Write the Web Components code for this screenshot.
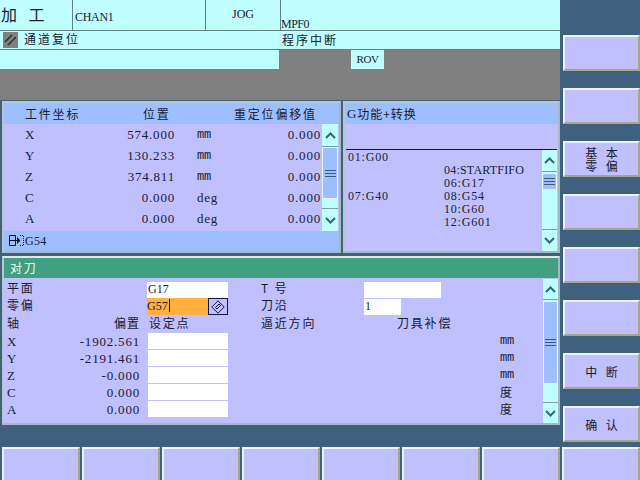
<!DOCTYPE html>
<html lang="zh">
<head>
<meta charset="utf-8">
<style>
html,body{margin:0;padding:0;width:640px;height:480px;overflow:hidden;background:#406080}
body{font:12px/1 "Liberation Serif","Noto Sans CJK SC",serif;color:#182030}
</style>
</head>
<body>
<cnc-app>
  <cnc-header slot="main"></cnc-header>
  <div slot="main" style="display:flex;gap:2px;padding:1px 0 0 2px;height:152px">
    <position-panel></position-panel>
    <gcode-panel></gcode-panel>
  </div>
  <div slot="main" style="padding:3px 0 0 2px"><tool-panel></tool-panel></div>

  <cnc-softkey slot="side"></cnc-softkey>
  <cnc-softkey slot="side"></cnc-softkey>
  <cnc-softkey slot="side">基 本<br>零 偏</cnc-softkey>
  <cnc-softkey slot="side"></cnc-softkey>
  <cnc-softkey slot="side"></cnc-softkey>
  <cnc-softkey slot="side"></cnc-softkey>
  <cnc-softkey slot="side">中 断</cnc-softkey>
  <cnc-softkey slot="side">确 认</cnc-softkey>

  <cnc-softkey slot="bottom"></cnc-softkey>
  <cnc-softkey slot="bottom"></cnc-softkey>
  <cnc-softkey slot="bottom"></cnc-softkey>
  <cnc-softkey slot="bottom"></cnc-softkey>
  <cnc-softkey slot="bottom"></cnc-softkey>
  <cnc-softkey slot="bottom"></cnc-softkey>
  <cnc-softkey slot="bottom"></cnc-softkey>
  <cnc-softkey slot="bottom"></cnc-softkey>
</cnc-app>

<script>
const COMMON = `
  :host{box-sizing:border-box}
  *{box-sizing:border-box}
  .l{font-family:"Liberation Serif",serif;font-size:13px;letter-spacing:.8px}
  .s{font-family:"Liberation Serif",serif;font-size:12px;letter-spacing:0}
  .m{font-family:"Liberation Mono",monospace;font-size:12px;letter-spacing:-.2px}
  .c{font-family:"Noto Sans CJK SC",sans-serif;font-size:12px;letter-spacing:1.8px}
`;
function define(name, html){
  const t = document.createElement('template');
  t.innerHTML = `<style>${COMMON}</style>` + html;
  customElements.define(name, class extends HTMLElement{
    constructor(){
      super();
      this.attachShadow({mode:'open'}).appendChild(t.content.cloneNode(true));
    }
  });
}

define('cnc-app', `<style>
  :host{display:grid;grid-template-columns:560px 80px;grid-template-rows:447px 33px;width:640px;height:480px;background:#406080}
  .main{display:block}
  .side{display:flex;flex-direction:column;gap:17px;padding:35px 0 0 3px}
  .bottom{grid-column:1/3;display:flex;gap:2px;padding-left:2px}
</style>
<div class="main"><slot name="main"></slot></div>
<div class="side"><slot name="side"></slot></div>
<div class="bottom"><slot name="bottom"></slot></div>`);

define('cnc-softkey', `<style>
  :host{display:flex;align-items:center;justify-content:center;text-align:center;
    width:78px;height:36px;background:#c0c0ff;
    border-style:solid;border-width:2px;border-color:#eef4ff #a4a888 #a4a888 #eef4ff;
    font:12px/13px "Noto Sans CJK SC",sans-serif;word-spacing:6px;color:#182030}
  :host([slot=side]){width:77px}
</style><div><slot></slot></div>`);

define('cnc-header', `<style>
  :host{display:block;height:100px;background:#808080}
  .r1{display:grid;grid-template-columns:72px 132px 74px 1fr;gap:1px;background:#608080;height:31px;padding-bottom:1px}
  .r1>div{background:#bfffff;display:flex;align-items:center}
  .t{font:16px "Noto Sans CJK SC",sans-serif;word-spacing:8px;padding-left:1px;margin-top:-3px}
  .r2{display:grid;grid-template-columns:280px 1fr;background:#bfffff;border-bottom:1px solid #608080;height:19px;align-items:center}
  .r2 .a{display:flex;align-items:center;gap:6px;padding-left:3px}
  .r3{display:flex;gap:72px;height:19px}
  .r3 .a{width:279px;background:#bfffff}
  .rov{width:33px;background:#bfffff;text-align:center;line-height:18px;font-size:11px;letter-spacing:-.4px}
  svg{display:block}
</style>
<div class="r1">
  <div><span class="t">加 工</span></div>
  <div class="s" style="padding:3px 0 0 2px;letter-spacing:-.3px">CHAN1</div>
  <div class="s" style="justify-content:center;padding:0 0 3px 0">JOG</div>
  <div class="s" style="align-items:flex-end;letter-spacing:-.5px">MPF0</div>
</div>
<div class="r2">
  <div class="a">
    <svg width="15" height="16" viewBox="0 0 15 16"><rect width="15" height="16" fill="#808080"/><path d="M2 10 9 3M5 13 13 5" stroke="#202830" stroke-width="1.4" fill="none"/></svg>
    <span class="c" style="letter-spacing:2px;margin-top:-2px">通道复位</span>
  </div>
  <div class="c" style="letter-spacing:2px;padding-left:2px">程序中断</div>
</div>
<div class="r3"><div class="a"></div><div class="s rov">ROV</div></div>`);

define('cnc-scrollbar', `<style>
  :host{display:flex;flex-direction:column;background:#bfffff;width:15px;flex:none}
  .b{display:flex;align-items:center;justify-content:center;height:var(--btn,22px);flex:none;background:#bfffff}
  .b.u{border-bottom:1px solid #80a0a0}
  .b.d{border-top:1px solid #80a0a0}
  .tr{flex:1}
  .th{height:var(--thumb,50px);margin-top:var(--off,0);background:#9dbfff;border:1px solid #e8f4ff;border-radius:2px;display:flex;align-items:center;justify-content:center}
  svg{display:block}
</style>
<div class="b u"><svg width="11" height="7" viewBox="0 0 11 7"><path d="M1 6 5.500 1.500 10 6" stroke="#306878" stroke-width="2" fill="none"/></svg></div>
<div class="tr"><div class="th"><svg width="11" height="7" viewBox="0 0 11 7"><path d="M0 .5H11M0 3.500H11M0 6.500H11" stroke="#405878"/></svg></div></div>
<div class="b d"><svg width="11" height="7" viewBox="0 0 11 7"><path d="M1 1 5.500 5.500 10 1" stroke="#306878" stroke-width="2" fill="none"/></svg></div>`);

const FRAME = `
  :host{display:flex;flex-direction:column;background:#c0c0ff;border:2px solid;border-color:#b8c8d0 #a8b8c0 #a8b8c0 #b8c8d0}
  .head{height:21px;background:#9dbfff;display:flex;align-items:center;flex:none}
`;

define('position-panel', `<style>${FRAME}
  :host{width:339px;height:152px}
  .head{display:grid;grid-template-columns:21px 118px 91px 1fr}
  .body{height:107px;display:flex}
  .rows{width:318px;padding-left:21px;display:grid;grid-template-columns:50px 100px 22px 50px 74px;grid-auto-rows:21px;align-items:center}
  .v{text-align:right}
  cnc-scrollbar{--btn:23px;--thumb:52px;width:16px}
  .foot{height:20px;background:#9dbfff;display:flex;align-items:center;padding:0 0 1px 5px;gap:1px}
  svg{display:block}
</style>
<div class="head"><span></span><span class="c">工件坐标</span><span class="c">位置</span><span class="c">重定位偏移值</span></div>
<div class="body">
  <div class="rows l">
    <span>X</span><span class="v">574.000</span><span></span><span class="m">mm</span><span class="v">0.000</span>
    <span>Y</span><span class="v">130.233</span><span></span><span class="m">mm</span><span class="v">0.000</span>
    <span>Z</span><span class="v">374.811</span><span></span><span class="m">mm</span><span class="v">0.000</span>
    <span>C</span><span class="v">0.000</span><span></span><span>deg</span><span class="v">0.000</span>
    <span>A</span><span class="v">0.000</span><span></span><span>deg</span><span class="v">0.000</span>
  </div>
  <cnc-scrollbar></cnc-scrollbar>
</div>
<div class="foot">
  <svg width="15" height="11" viewBox="0 0 15 11"><path d="M.5 .5H6.500V10.500H.5ZM.5 5.500H10" stroke="#101828" fill="none"/><path d="M8 2 11.500 5.500 8 9Z" fill="#101828"/><path d="M11 .5H14.500V10.500H11" stroke="#101828" stroke-dasharray="1 1" fill="none"/></svg>
  <span class="s" style="letter-spacing:.3px">G54</span>
</div>`);

define('gcode-panel', `<style>${FRAME}
  :host{width:217px;height:152px}
  .head{padding-left:2px}
  .gap{height:25px}
  .list{flex:1;display:flex;border-top:1px solid #101820;margin:0 1px;min-height:0}
  .g{flex:1;display:grid;grid-template-columns:96px 1fr;grid-auto-rows:13px;padding:1px 0 0 2px;line-height:13px;align-content:start;letter-spacing:.8px}
  cnc-scrollbar{--btn:22px;--thumb:17px;--off:1px}
</style>
<div class="head"><span class="l">G</span><span class="c" style="letter-spacing:1px">功能+转换</span></div>
<div class="gap"></div>
<div class="list">
  <div class="g s" style="letter-spacing:.8px">
    <span>01:G00</span><span></span>
    <span></span><span style="letter-spacing:.2px">04:STARTFIFO</span>
    <span></span><span>06:G17</span>
    <span>07:G40</span><span>08:G54</span>
    <span></span><span>10:G60</span>
    <span></span><span>12:G601</span>
  </div>
  <cnc-scrollbar></cnc-scrollbar>
</div>`);

define('tool-panel', `<style>${FRAME}
  :host{width:558px;height:169px;border-top-color:#e0e8f0}
  .head{height:20px;background:#40a080;color:#f4fff8;padding-left:6px}
  .body{flex:1;display:flex;min-height:0}
  .form{width:539px;padding-top:3px;display:grid;grid-template-columns:143px 81px 33px 103px 33px 44px 59px 43px;grid-auto-rows:17px;align-items:center}
  .p{padding-left:3px}
  .up2{position:relative;top:-2px}
  .up1{position:relative;top:-1px}
  .ax{display:flex;justify-content:space-between;padding:1px 7px 0 3px}
  .f{background:#fff;height:16px;display:flex;align-items:center;padding:0 0 1px 1px}
  .sel{background:#ffb040;height:17px;display:flex;align-items:stretch}
  .sel .txt{flex:1;display:flex;align-items:center;padding-bottom:2px}
  .cur{display:inline-block;width:1px;height:13px;background:#101020;margin-left:1px}
  .btn{width:20px;border:1px solid #101840;background:#c0c0ff;display:flex;align-items:center;justify-content:center}
  .set{background:#fff;height:16px;margin-left:1px}
  .u{padding-top:1px}
  cnc-scrollbar{--btn:21px;--thumb:83px;--off:1px;margin-top:1px}
  svg{display:block}
</style>
<div class="head"><span class="c">对刀</span></div>
<div class="body">
  <div class="form">
    <span class="c p up2">平面</span>
    <span class="f s">G17</span><span></span>
    <span class="c up2">T 号</span>
    <span class="f" style="grid-column:span 2"></span><span></span><span></span>

    <span class="c p up2">零偏</span>
    <span class="sel s"><span class="txt">G57<i class="cur"></i></span><span class="btn"><svg width="14" height="14" viewBox="0 0 14 14"><path d="M7 .8 13.200 7 7 13.200 .8 7Z" fill="none" stroke="#101840"/><path d="M4.500 7.500 8 4 9.500 5.500 6 9Z" fill="none" stroke="#101840"/></svg></span></span><span></span>
    <span class="c up2">刀沿</span>
    <span class="f s" style="width:37px">1</span><span></span><span></span><span></span>

    <span class="c p up1" style="display:flex;justify-content:space-between;padding-right:7px"><span>轴</span><span style="letter-spacing:1px">偏置</span></span>
    <span class="c up1" style="padding-left:2px">设定点</span><span></span>
    <span class="c up1" style="grid-column:span 2">逼近方向</span>
    <span class="c up1" style="grid-column:span 2">刀具补偿</span><span></span>

    <span class="l ax"><span>X</span><span>-1902.561</span></span><span class="set"></span><span></span><span></span><span></span><span></span><span></span><span class="m u">mm</span>
    <span class="l ax"><span>Y</span><span>-2191.461</span></span><span class="set"></span><span></span><span></span><span></span><span></span><span></span><span class="m u">mm</span>
    <span class="l ax"><span>Z</span><span>-0.000</span></span><span class="set"></span><span></span><span></span><span></span><span></span><span></span><span class="m u">mm</span>
    <span class="l ax"><span>C</span><span>0.000</span></span><span class="set"></span><span></span><span></span><span></span><span></span><span></span><span class="c u">度</span>
    <span class="l ax"><span>A</span><span>0.000</span></span><span class="set"></span><span></span><span></span><span></span><span></span><span></span><span class="c u">度</span>
  </div>
  <cnc-scrollbar></cnc-scrollbar>
</div>`);
</script>
</body>
</html>
